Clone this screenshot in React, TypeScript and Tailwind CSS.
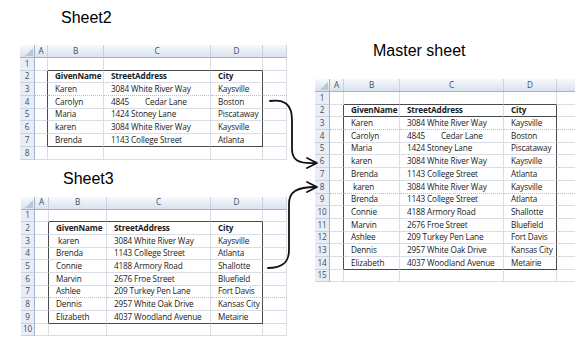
type Row = [string, string, string];

const sheet2: Row[] = [
  ['GivenName', 'StreetAddress', 'City'],
  ['Karen', '3084 White River Way', 'Kaysville'],
  ['Carolyn', '4845        Cedar Lane', 'Boston'],
  ['Maria', '1424 Stoney Lane', 'Piscataway'],
  ['karen', '3084 White River Way', 'Kaysville'],
  ['Brenda', '1143 College Street', 'Atlanta'],
];

const sheet3: Row[] = [
  ['GivenName', 'StreetAddress', 'City'],
  [' karen', '3084 White River Way', 'Kaysville'],
  ['Brenda', '1143 College Street', 'Atlanta'],
  ['Connie', '4188 Armory Road', 'Shallotte'],
  ['Marvin', '2676 Froe Street', 'Bluefield'],
  ['Ashlee', '209 Turkey Pen Lane', 'Fort Davis'],
  ['Dennis', '2957 White Oak Drive', 'Kansas City'],
  ['Elizabeth', '4037 Woodland Avenue', 'Metairie'],
];

const master: Row[] = [...sheet2, ...sheet3.slice(1)];

function Sheet({
  w,
  rows,
  data,
  dotted = [],
  underline = false,
}: {
  w: string[];
  rows: number;
  data: Row[];
  dotted?: number[];
  underline?: boolean;
}) {
  const last = data.length + 1;
  const nums = Array.from({ length: rows }, (_, i) => i + 1);

  return (
    <div className="flex flex-col font-['Open_Sans',sans-serif] text-[8.2px] leading-none tracking-[-0.15px] text-[#1a1a1a]">
      <div className="flex h-[13px] border-b border-[#9fb3cc] bg-linear-to-b from-[#f7f9fc] to-[#d9e2ed]">
        <div className={`${w[0]} relative border-r border-[#9fb3cc]`}>
          <svg className="absolute right-[1px] bottom-[1px]" width="8" height="8" viewBox="0 0 8 8">
            <polygon points="8,0 8,8 0,8" fill="#b9c6d6" />
          </svg>
        </div>
        {['A', 'B', 'C', 'D', ''].map((l, i) => (
          <div
            key={i}
            className={`${w[i + 1]} flex items-center justify-center border-r border-[#c6d2df] text-[#3e4d63]`}
          >
            {l}
          </div>
        ))}
      </div>

      {nums.map((r) => {
        const inBox = r >= 2 && r <= last;
        const edge = r === 1 || r === last || (underline && r === 2);
        const dot = dotted.includes(r);
        const cells = data[r - 2];
        const bottom = edge
          ? 'border-b-[#4a4a4a]'
          : dot
            ? 'border-b-[#b8bec8] [border-bottom-style:dotted]'
            : 'border-b-[#d8dde6]';
        return (
          <div key={r} className="flex h-[12.7px]">
            <div
              className={`${w[0]} flex items-center justify-center border-r border-b border-r-[#9fb3cc] border-b-[#c8d3e1] bg-[#e9eef6] text-[#3e4d63]`}
            >
              {r}
            </div>
            <div
              className={`${w[1]} border-r border-b ${inBox ? 'border-r-[#4a4a4a]' : 'border-r-[#d8dde6]'} ${dot ? 'border-b-[#b8bec8] [border-bottom-style:dotted]' : 'border-b-[#d8dde6]'}`}
            />
            {[0, 1, 2].map((c) => (
              <div
                key={c}
                className={`${w[c + 2]} flex items-center overflow-hidden whitespace-pre pl-[7px] border-r border-b ${
                  c === 2 && inBox ? 'border-r-[#4a4a4a]' : 'border-r-[#d8dde6]'
                } ${bottom} ${r === 2 ? 'font-bold' : 'font-medium'}`}
              >
                {cells ? cells[c] : ''}
              </div>
            ))}
            <div
              className={`${w[5]} border-r border-b border-r-[#d8dde6] ${dot ? 'border-b-[#b8bec8] [border-bottom-style:dotted]' : 'border-b-[#d8dde6]'}`}
            />
          </div>
        );
      })}
    </div>
  );
}

export default function App() {
  return (
    <div className="relative flex h-[346px] w-[575px] overflow-hidden bg-white">
      <div className="flex w-[290px] flex-col pl-[20px] pt-[9px]">
        <div className="ml-[41px] font-['Liberation_Sans',Arial,sans-serif] text-[16px] leading-[18px] text-black">
          Sheet2
        </div>
        <div className="mt-[18px]">
          <Sheet
            w={['w-[15px]', 'w-[13px]', 'w-[56px]', 'w-[107px]', 'w-[52px]', 'w-[24px]']}
            rows={8}
            data={sheet2}
            dotted={[3]}
          />
        </div>
        <div className="ml-[43px] mt-[10px] font-['Liberation_Sans',Arial,sans-serif] text-[16px] leading-[18px] text-black">
          Sheet3
        </div>
        <div className="ml-[1px] mt-[9px]">
          <Sheet
            w={['w-[14px]', 'w-[14px]', 'w-[58px]', 'w-[104px]', 'w-[52px]', 'w-[24px]']}
            rows={10}
            data={sheet3}
            dotted={[7]}
          />
        </div>
      </div>

      <div className="flex flex-col pl-[28px] pt-[42px]">
        <div className="ml-[58px] font-['Liberation_Sans',Arial,sans-serif] text-[16px] leading-[18px] text-black">
          Master sheet
        </div>
        <div className="mt-[19px]">
          <Sheet
            w={['w-[15px]', 'w-[14px]', 'w-[56px]', 'w-[104px]', 'w-[53px]', 'w-[20px]']}
            rows={15}
            data={master}
            dotted={[3, 8]}
            underline
          />
        </div>
      </div>

      <svg
        className="pointer-events-none absolute inset-0"
        width="575"
        height="346"
        viewBox="0 0 575 346"
        fill="none"
        stroke="#111"
        strokeWidth="1.8"
        strokeLinecap="round"
        strokeLinejoin="round"
      >
        <path d="M270 101 C284 99 292 104 292 120 L292 149 C292 160 298 164 316 163" />
        <path d="M307 158 L317 163 L307 168" />
        <path d="M268 268 C283 268 289 262 289 250 L289 204 C289 192 296 187 316 187" />
        <path d="M307 182 L317 187 L307 192" />
      </svg>
    </div>
  );
}
